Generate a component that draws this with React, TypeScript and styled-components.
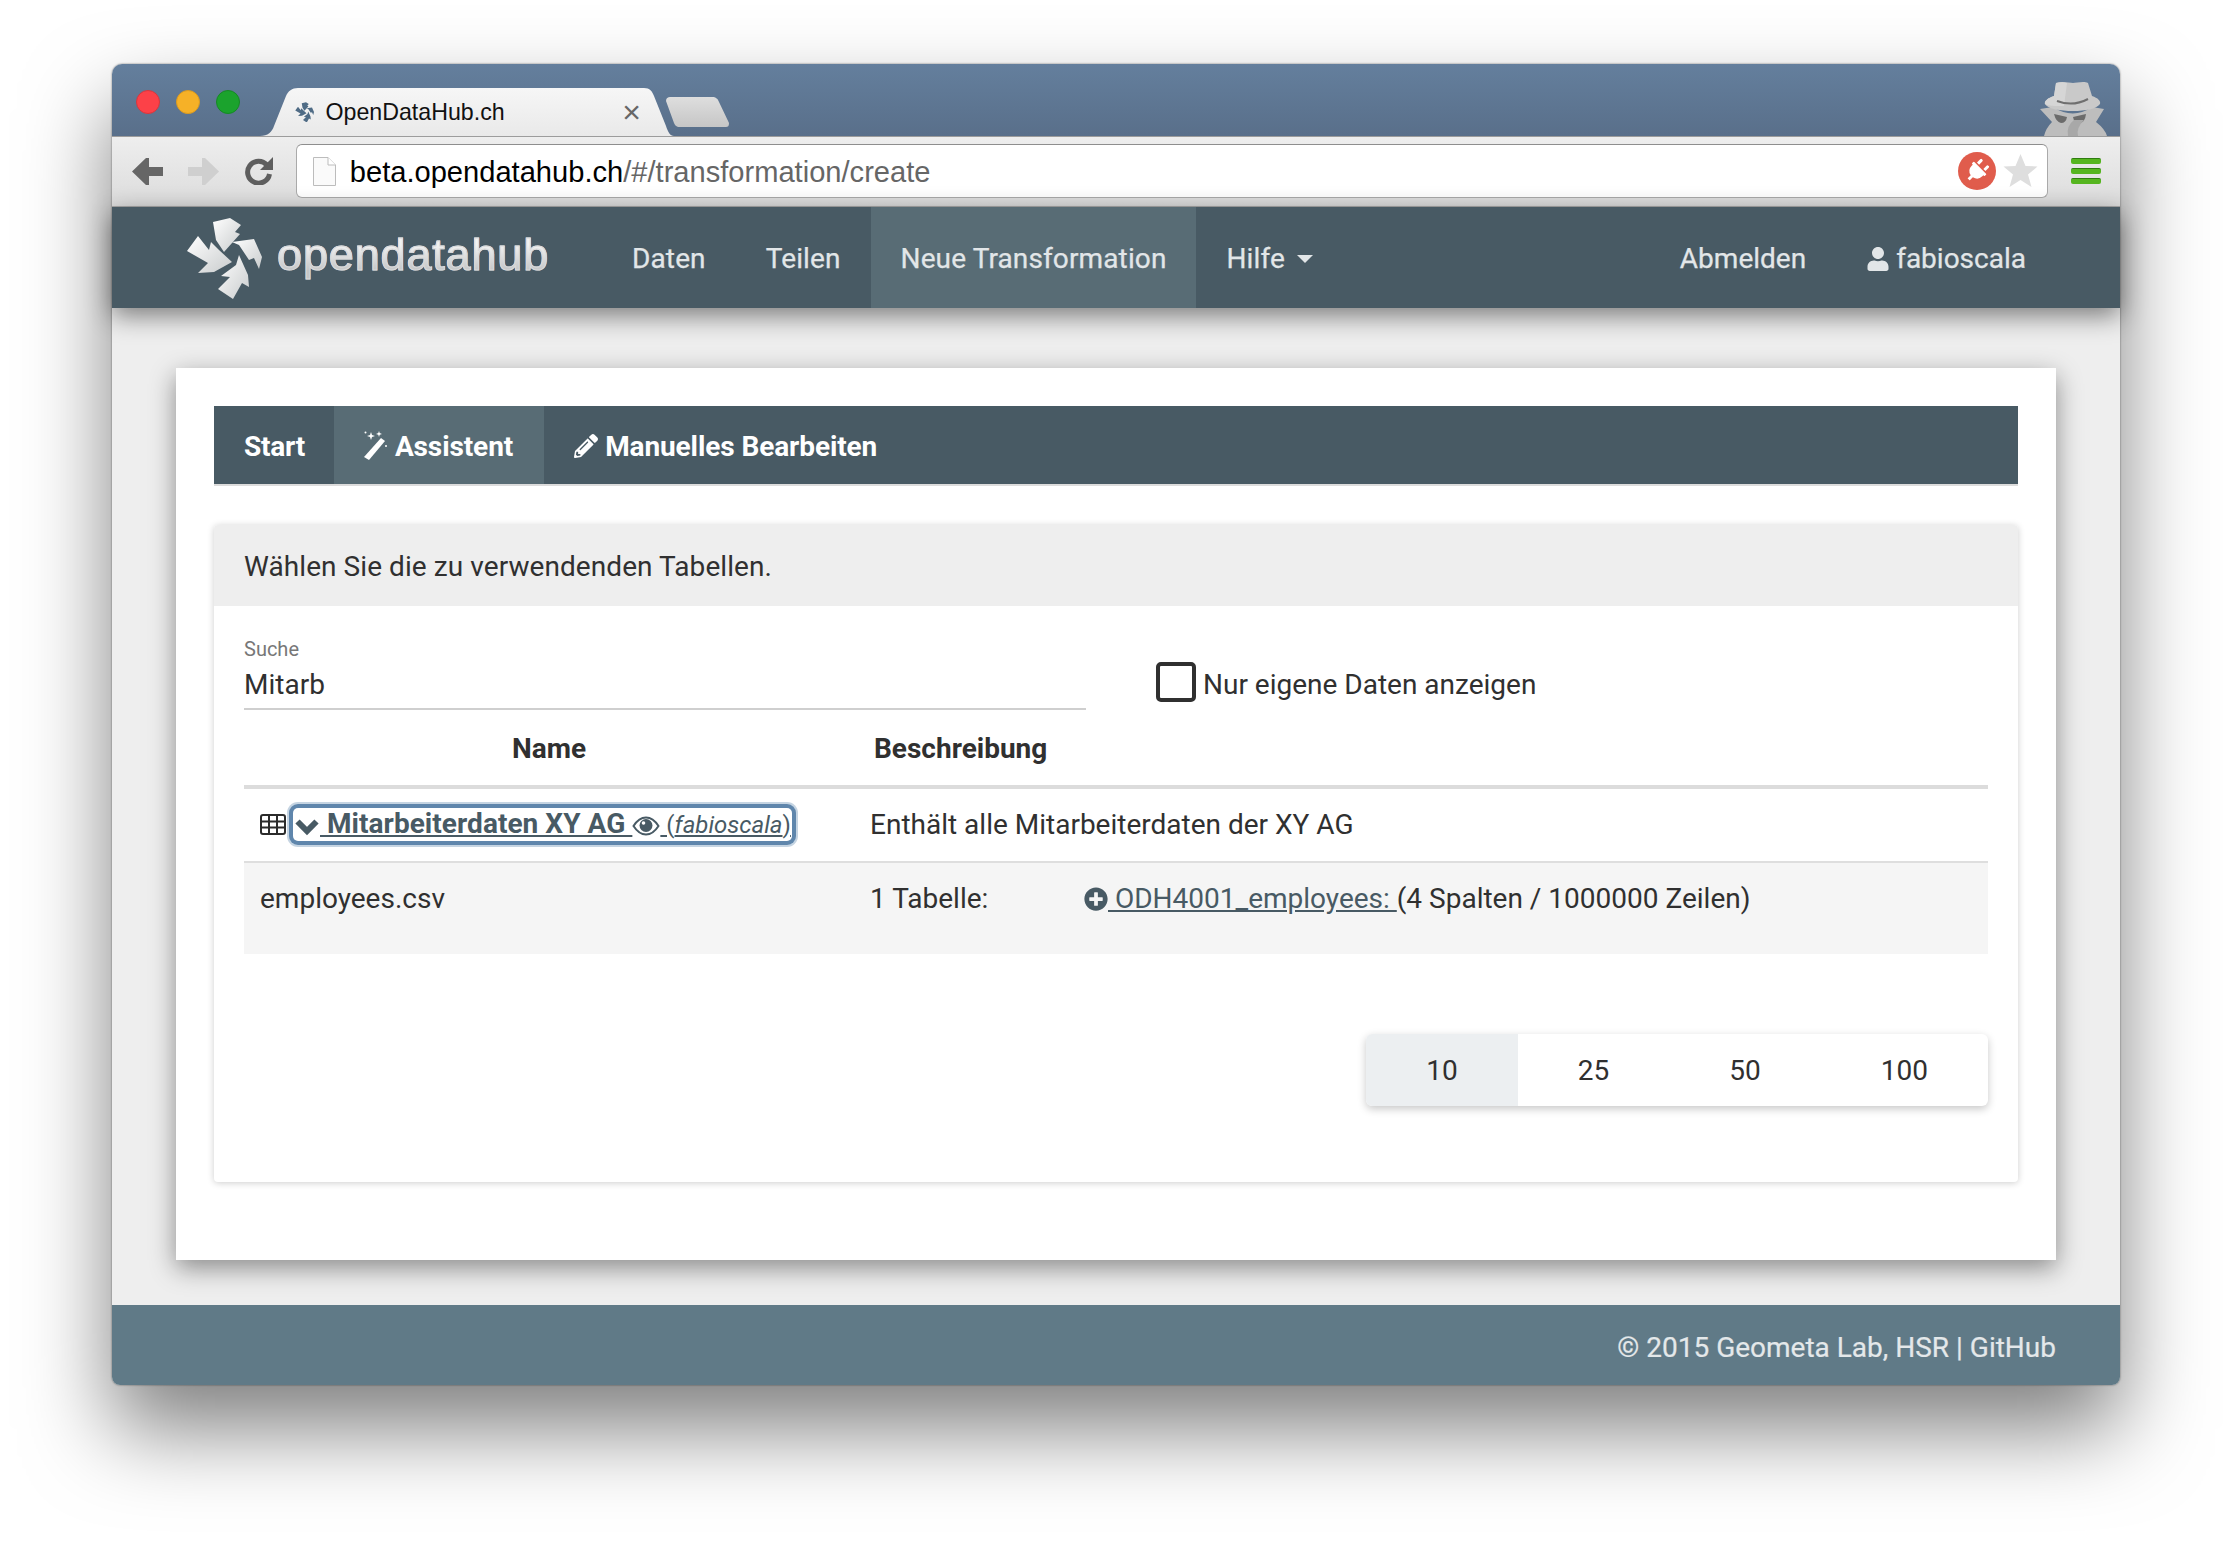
import React from 'react'
import styled, { createGlobalStyle } from 'styled-components'
import {
  FaPencilAlt, FaPlug, FaPlusCircle, FaUser,
} from 'react-icons/fa'

const GlobalStyle = createGlobalStyle`
  html, body {
    margin: 0;
    background: #fff;
  }
  * { box-sizing: border-box; }
`

const Page = styled.div`
  width: 2232px;
  height: 1544px;
  padding: 64px 112px 0;
  overflow: hidden;
  font-family: Roboto, "Liberation Sans", sans-serif;
  font-size: 28px;
  color: #303030;
`

const Window = styled.div`
  display: flex;
  flex-direction: column;
  height: 1321px;
  border-radius: 10px 10px 8px 8px;
  box-shadow: 0 44px 86px rgba(0, 0, 0, .5), 0 0 2px rgba(0, 0, 0, .55);
`

/* browser chrome */
const TitleBar = styled.div`
  display: flex;
  align-items: flex-end;
  height: 72px;
  padding-left: 24px;
  border-radius: 10px 10px 0 0;
  background: linear-gradient(#647f9d, #596f8a);
  font-family: "Liberation Sans", Arial, sans-serif;
`

const Lights = styled.div`
  display: flex;
  gap: 16px;
  align-self: flex-start;
  margin-top: 26px;
`

const Light = styled.span<{ $color: string; $edge: string }>`
  width: 24px;
  height: 24px;
  border-radius: 50%;
  background: ${(p) => p.$color};
  border: 1px solid ${(p) => p.$edge};
`

const Tab = styled.div`
  display: flex;
  align-items: center;
  width: 414px;
  height: 48px;
  margin-left: 20px;
  padding: 0 35px 0 35px;
  background: linear-gradient(#f6f6f6, #e9e9e9);
  clip-path: path("M0 48 C8 48 12 44 14 38 L26 8 C28 3 32 0 38 0 L384 0 C390 0 392 3 394 8 L406 38 C408 44 410 48 414 48 Z");
  font-size: 23.2px;
  color: #111;
`

const TabTitle = styled.span`
  margin-left: 11.5px;
  flex: 1;
`

const TabClose = styled.span`
  font-size: 32px;
  line-height: 1;
  color: #666;
  margin-right: -2px;
`

const NewTab = styled.div`
  width: 63px;
  height: 30px;
  margin: 0 0 9px -8px;
  background: linear-gradient(#dedede, #c6c6c6);
  clip-path: path("M0 4 C0 1 2 0 4 0 L46 0 C50 0 52 2 53 5 L63 26 C63 29 62 30 60 30 L14 30 C10 30 9 28 8 26 Z");
`

const Spy = styled.svg`
  width: 67px;
  height: 56px;
  margin-left: auto;
  margin-right: 13px;
  display: block;
`

const Toolbar = styled.div`
  display: flex;
  align-items: center;
  height: 71px;
  padding: 0 19px 1px 8px;
  border-top: 1px solid #9c9c9c;
  border-bottom: 1px solid #a8a8a8;
  background: linear-gradient(#eeeeee, #dcdcdc);
  font-family: "Liberation Sans", Arial, sans-serif;
`

const NavSlot = styled.div`
  display: flex;
  justify-content: center;
  width: 55.6px;
`

const AddressBar = styled.div`
  display: flex;
  align-items: center;
  flex: 1;
  height: 54px;
  margin: 0 23px 0 9px;
  padding: 0 9px 0 16px;
  border: 1px solid #aaa;
  border-top-color: #8e8e8e;
  border-radius: 6px;
  background: #fff;
  font-size: 29.1px;
  color: #666;
`

const Url = styled.span`
  margin-left: 14px;
  padding-top: 2px;
  flex: 1;
`

const UrlHost = styled.span`
  color: #000;
`

const PlugBadge = styled.span`
  display: flex;
  align-items: center;
  justify-content: center;
  width: 38px;
  height: 38px;
  border-radius: 50%;
  background: #e05c4c;
  color: #fff;
  font-size: 24px;
  margin-right: 7px;
  svg { transform: rotate(45deg); }
`

const Burger = styled.div`
  display: flex;
  flex-direction: column;
  gap: 4px;
  width: 30px;
`

const BurgerBar = styled.span`
  height: 6px;
  border-radius: 2px;
  background: #55b51f;
  border-top: 1px solid #2f7d10;
`

/* navbar */
const Navbar = styled.nav`
  position: relative;
  z-index: 2;
  display: flex;
  align-items: stretch;
  height: 101px;
  padding: 0 64px 0 74px;
  background: #485a64;
  box-shadow: 0 8px 24px rgba(0, 0, 0, .48);
  color: #e2e6e8;
  -webkit-text-stroke: .25px #e2e6e8;
`

const Brand = styled.div`
  display: flex;
  align-items: center;
  width: 416px;
`

const BrandName = styled.span`
  margin-left: 15px;
  margin-top: -6px;
  font-family: "Liberation Sans", Arial, sans-serif;
  font-size: 45px;
  letter-spacing: .85px;
  background: linear-gradient(#f2f2f2 30%, #c4c6c7 80%);
  -webkit-background-clip: text;
  background-clip: text;
  color: transparent;
  -webkit-text-stroke: 1px #d9dadb;
`

const NavItem = styled.a<{ $active?: boolean }>`
  display: flex;
  align-items: center;
  gap: 6px;
  padding: 2px 30px 0;
  letter-spacing: .12px;
  background: ${(p) => (p.$active ? '#586c75' : 'transparent')};
  svg { font-size: 24px; }
`

const AccountItem = styled(NavItem)`
  letter-spacing: 0;
`

const Caret = styled.span`
  margin-left: 6px;
  border-left: 8px solid transparent;
  border-right: 8px solid transparent;
  border-top: 8px solid currentColor;
`

const NavSpacer = styled.div`
  flex: 1;
`

/* page content */
const Content = styled.main`
  flex: 1;
  padding: 60px 64px 44px;
  background: #eeeeee;
`

const Card = styled.section`
  height: 892px;
  padding: 38px;
  background: #fff;
  box-shadow: 0 8px 24px rgba(0, 0, 0, .42);
`

const Steps = styled.div`
  display: flex;
  height: 80px;
  border-bottom: 2px solid #dcdcdc;
  background: #485a64;
  color: #fff;
  font-weight: 700;
  letter-spacing: -.1px;
`

const Step = styled.a<{ $active?: boolean }>`
  display: flex;
  align-items: center;
  gap: 7px;
  padding: 2px 30px 0;
  background: ${(p) => (p.$active ? '#586c75' : 'transparent')};
  svg { font-size: 24px; }
`

const StartStep = styled(Step)`
  padding-right: 29px;
  letter-spacing: -.25px;
`

const WizardStep = styled(Step)`
  padding-right: 31px;
`

const Panel = styled.div`
  height: 657px;
  margin-top: 39px;
  border-radius: 4px;
  box-shadow: 0 1px 7px rgba(0, 0, 0, .2);
`

const PanelHeading = styled.div`
  display: flex;
  align-items: center;
  height: 81px;
  padding: 2px 30px 0;
  border-radius: 4px 4px 0 0;
  background: #eeeeee;
  letter-spacing: .07px;
`

const PanelBody = styled.div`
  padding: 31px 30px 0;
`

const Filters = styled.div`
  display: flex;
  align-items: flex-end;
  height: 73px;
  gap: 70px;
`

const SearchField = styled.div`
  width: 842px;
  height: 73px;
  border-bottom: 2px solid #cfcfcf;
`

const SearchLabel = styled.div`
  font-size: 20px;
  line-height: 24px;
  color: #777;
`

const SearchValue = styled.div`
  margin-top: 6px;
  line-height: 36px;
`

const CheckLabel = styled.label`
  display: flex;
  align-items: center;
  gap: 7px;
  margin-bottom: 8px;
`

const CheckBox = styled.span`
  width: 40px;
  height: 40px;
  margin-top: -4px;
  border: 4px solid #303030;
  border-radius: 5px;
`

const HeadRow = styled.div`
  display: grid;
  grid-template-columns: 610px 1fr;
  align-items: center;
  height: 79px;
  padding-top: 2px;
  border-bottom: 4px solid #dcdcdc;
  font-weight: 700;
`

const NameHead = styled.div`
  text-align: center;
`

const DescHead = styled.div`
  padding-left: 20px;
`

const BodyRow = styled.div`
  display: grid;
  grid-template-columns: 610px 1fr;
  align-items: center;
  height: 74px;
  padding-bottom: 2px;
  border-bottom: 2px solid #dedede;
`

const NameCell = styled.div`
  display: flex;
  align-items: center;
  padding-left: 16px;
`

const DescCell = styled.div`
  padding-left: 16px;
`

const FocusLink = styled.a`
  display: inline-block;
  margin-left: 7px;
  padding: 0 1px 0 1px;
  line-height: 32px;
  border-radius: 5px;
  background: #fff;
  box-shadow: 0 0 0 4px #5f86ac, 0 0 0 6px #c5d4e2;
  color: #485a64;
  font-weight: 700;
  letter-spacing: .05px;
  text-decoration: underline;
  white-space: pre;
  svg { vertical-align: -3px; }
`

const Owner = styled.span`
  font-size: 24px;
  font-weight: 400;
  letter-spacing: 0;
`

const OwnerName = styled.em`
  font-style: italic;
`

const DetailRow = styled.div`
  display: grid;
  grid-template-columns: 610px 230px 1fr;
  height: 91px;
  padding-top: 18px;
  line-height: 36px;
  background: #f5f5f5;
`

const DetailName = styled.div`
  padding-left: 16px;
`

const DetailCount = styled.div`
  padding-left: 16px;
`

const ColumnLink = styled.a`
  color: #485a64;
  text-decoration: underline;
  white-space: pre;
  svg { font-size: 24px; vertical-align: -3px; }
`

const Pager = styled.div`
  display: flex;
  width: fit-content;
  height: 72px;
  margin: 80px 0 0 auto;
  border-radius: 6px;
  background: #fff;
  box-shadow: 0 3px 8px rgba(0, 0, 0, .22);
  overflow: hidden;
`

const PageCell = styled.a<{ $active?: boolean }>`
  display: flex;
  align-items: center;
  padding: 0 60px;
  background: ${(p) => (p.$active ? '#eceff1' : 'transparent')};
`

const Footer = styled.footer`
  display: flex;
  align-items: center;
  justify-content: flex-end;
  height: 80px;
  padding: 5px 64px 0;
  border-radius: 0 0 8px 8px;
  background: #607a87;
  color: #e4e8ea;
  -webkit-text-stroke: .2px #e4e8ea;
`

function HubLogo({ size, fill }: { size: number; fill: string }) {
  return (
    <svg width={size} height={size * (82 / 76)} viewBox="15 17 76 82">
      <defs>
        <linearGradient id="hubShade" x1="0" y1="0" x2="1" y2="1">
          <stop offset="0" stopColor="#ffffff" />
          <stop offset="1" stopColor="#c9cccd" />
        </linearGradient>
      </defs>
      <g fill={fill}>
        <polygon points="42,22 59,18 70,25 64,32 69,34 53,52 45,40" />
        <polygon points="61,42 83,39 91,57 88,69 83,58 78,60 68,45" />
        <polygon points="16,51 27,36 38,50 40,42 48,50 61,62 43,72 27,73 37,63" />
        <polygon points="68,55 77,75 78,87 71,83 62,99 47,89 59,77 50,76 65,65" />
      </g>
    </svg>
  )
}

function Arrow({ flip, color }: { flip?: boolean; color: string }) {
  return (
    <svg width="31" height="27" viewBox="0 0 31 27" style={flip ? { transform: 'scaleX(-1)' } : undefined}>
      <path d="M14 0 L0 13.5 L14 27 L17 27 L17 18 L31 18 L31 9 L17 9 L17 0 Z" fill={color} />
    </svg>
  )
}

function Reload() {
  return (
    <svg width="28" height="28" viewBox="0 0 28 28">
      <path d="M22 8 A11 11 0 1 0 24.5 17" fill="none" stroke="#5e5e5e" strokeWidth="5" />
      <polygon points="28,0 28,13 15,13" fill="#5e5e5e" />
    </svg>
  )
}

function FileIcon() {
  return (
    <svg width="23" height="29" viewBox="0 0 23 29">
      <path d="M.5.5 H15 L22.5 8 V28.5 H.5 Z" fill="#fafafa" stroke="#bcbcbc" />
      <path d="M15 .5 V8 H22.5" fill="#fff" stroke="#bcbcbc" />
    </svg>
  )
}

function Star() {
  return (
    <svg width="35" height="34" viewBox="0 0 34 34">
      <polygon points="17,0 22,12 34,12.5 24.5,20.5 28,33 17,26 6,33 9.5,20.5 0,12.5 12,12" fill="#dedede" />
    </svg>
  )
}

function GridIcon() {
  return (
    <svg width="26" height="21" viewBox="0 0 26 21">
      <rect x="1" y="1" width="24" height="19" rx="2" fill="#fff" stroke="#2b2b2b" strokeWidth="2" />
      <path d="M9 1 V20 M17 1 V20 M1 7.5 H25 M1 13.5 H25" stroke="#2b2b2b" strokeWidth="2" />
    </svg>
  )
}

function Wand() {
  return (
    <svg width="24" height="30" viewBox="0 0 24 30" fill="#fff">
      <path d="M17 7 L21 10 L5 29 L0 26 Z" />
      <path d="M7 1 L8 4 L11 5 L8 6 L7 9 L6 6 L3 5 L6 4 Z" />
      <path d="M15 0 L15.7 2 L18 3 L15.7 3.8 L15 6 L14.3 3.8 L12 3 L14.3 2 Z" />
      <circle cx="22" cy="15" r="1" />
      <circle cx="1.5" cy="1.5" r="1" />
    </svg>
  )
}

function Chevron() {
  return (
    <svg width="26" height="19" viewBox="0 0 26 19">
      <path d="M3.5 4.5 L13 14 L22.5 4.5" fill="none" stroke="#485a64" strokeWidth="6" />
    </svg>
  )
}

function EyeIcon() {
  return (
    <svg width="28" height="20" viewBox="0 0 28 20">
      <path d="M1.5 10 C6 3 10 1.5 14 1.5 C18 1.5 22 3 26.5 10 C22 17 18 18.5 14 18.5 C10 18.5 6 17 1.5 10 Z" fill="#fff" stroke="#485a64" strokeWidth="2" />
      <circle cx="14" cy="9.5" r="6.5" fill="#485a64" />
      <circle cx="11.5" cy="7" r="1.8" fill="#fff" />
    </svg>
  )
}

export default function App() {
  return (
    <Page>
      <GlobalStyle />
      <Window>
        <TitleBar>
          <Lights>
            <Light $color="#fc4148" $edge="#d9363c" />
            <Light $color="#f6b127" $edge="#dc9a1e" />
            <Light $color="#1ba32d" $edge="#158a24" />
          </Lights>
          <Tab>
            <HubLogo size={19} fill="#4f6b85" />
            <TabTitle>OpenDataHub.ch</TabTitle>
            <TabClose>×</TabClose>
          </Tab>
          <NewTab />
          <Spy viewBox="0 0 67 56">
            <path d="M0 29 L13 27 Q33 40 52 27 L64 29 L56 42 Q65 49 67 56 L4 56 Q6 48 12 42 Z" fill="#bdbdbd" />
            <path d="M16 3 C22 1 30 3 33 3 C36 3 44 1 48 3 L52 16 C58 18 61 21 60 24 C56 29 46 31 33 31 C20 31 8 29 5 24 C4 21 8 18 14 16 Z" fill="#c9c9c9" />
            <path d="M16 3 C20 2 24 2 27 3 L24 26 C16 26 8 26 5 24 C4 21 8 18 14 16 Z" fill="#d6d6d6" />
            <path d="M17 21 Q33 27 48 19" fill="none" stroke="#6f6f6f" strokeWidth="2" />
            <path d="M14 34 L27 37 Q26 43 21 43 Q16 42 14 34 M33 37 L46 34 Q45 43 39 43 Q34 43 33 37" fill="#6b6b6b" />
            <path d="M28 56 Q26 46 34 40 L44 40 Q36 48 38 56 Z" fill="#a8a8a8" />
          </Spy>
        </TitleBar>
        <Toolbar>
          <NavSlot><Arrow color="#666" /></NavSlot>
          <NavSlot><Arrow flip color="#cfcfcf" /></NavSlot>
          <NavSlot><Reload /></NavSlot>
          <AddressBar>
            <FileIcon />
            <Url>
              <UrlHost>beta.opendatahub.ch</UrlHost>
              /#/transformation/create
            </Url>
            <PlugBadge><FaPlug /></PlugBadge>
            <Star />
          </AddressBar>
          <Burger>
            <BurgerBar />
            <BurgerBar />
            <BurgerBar />
          </Burger>
        </Toolbar>
        <Navbar>
          <Brand>
            <HubLogo size={76} fill="url(#hubShade)" />
            <BrandName>opendatahub</BrandName>
          </Brand>
          <NavItem>Daten</NavItem>
          <NavItem>Teilen</NavItem>
          <NavItem $active>Neue Transformation</NavItem>
          <NavItem>
            Hilfe
            <Caret />
          </NavItem>
          <NavSpacer />
          <AccountItem>Abmelden</AccountItem>
          <AccountItem>
            <FaUser />
            fabioscala
          </AccountItem>
        </Navbar>
        <Content>
          <Card>
            <Steps>
              <StartStep>Start</StartStep>
              <WizardStep $active>
                <Wand />
                Assistent
              </WizardStep>
              <Step>
                <FaPencilAlt />
                Manuelles Bearbeiten
              </Step>
            </Steps>
            <Panel>
              <PanelHeading>Wählen Sie die zu verwendenden Tabellen.</PanelHeading>
              <PanelBody>
                <Filters>
                  <SearchField>
                    <SearchLabel>Suche</SearchLabel>
                    <SearchValue>Mitarb</SearchValue>
                  </SearchField>
                  <CheckLabel>
                    <CheckBox />
                    Nur eigene Daten anzeigen
                  </CheckLabel>
                </Filters>
                <HeadRow>
                  <NameHead>Name</NameHead>
                  <DescHead>Beschreibung</DescHead>
                </HeadRow>
                <BodyRow>
                  <NameCell>
                    <GridIcon />
                    <FocusLink>
                      <Chevron />
                      {' Mitarbeiterdaten XY AG '}
                      <EyeIcon />
                      <Owner>
                        {' ('}
                        <OwnerName>fabioscala</OwnerName>
                        )
                      </Owner>
                    </FocusLink>
                  </NameCell>
                  <DescCell>Enthält alle Mitarbeiterdaten der XY AG</DescCell>
                </BodyRow>
                <DetailRow>
                  <DetailName>employees.csv</DetailName>
                  <DetailCount>1 Tabelle:</DetailCount>
                  <div>
                    <ColumnLink>
                      <FaPlusCircle />
                      {' ODH4001_employees: '}
                    </ColumnLink>
                    (4 Spalten / 1000000 Zeilen)
                  </div>
                </DetailRow>
                <Pager>
                  <PageCell $active>10</PageCell>
                  <PageCell>25</PageCell>
                  <PageCell>50</PageCell>
                  <PageCell>100</PageCell>
                </Pager>
              </PanelBody>
            </Panel>
          </Card>
        </Content>
        <Footer>© 2015 Geometa Lab, HSR | GitHub</Footer>
      </Window>
    </Page>
  )
}
